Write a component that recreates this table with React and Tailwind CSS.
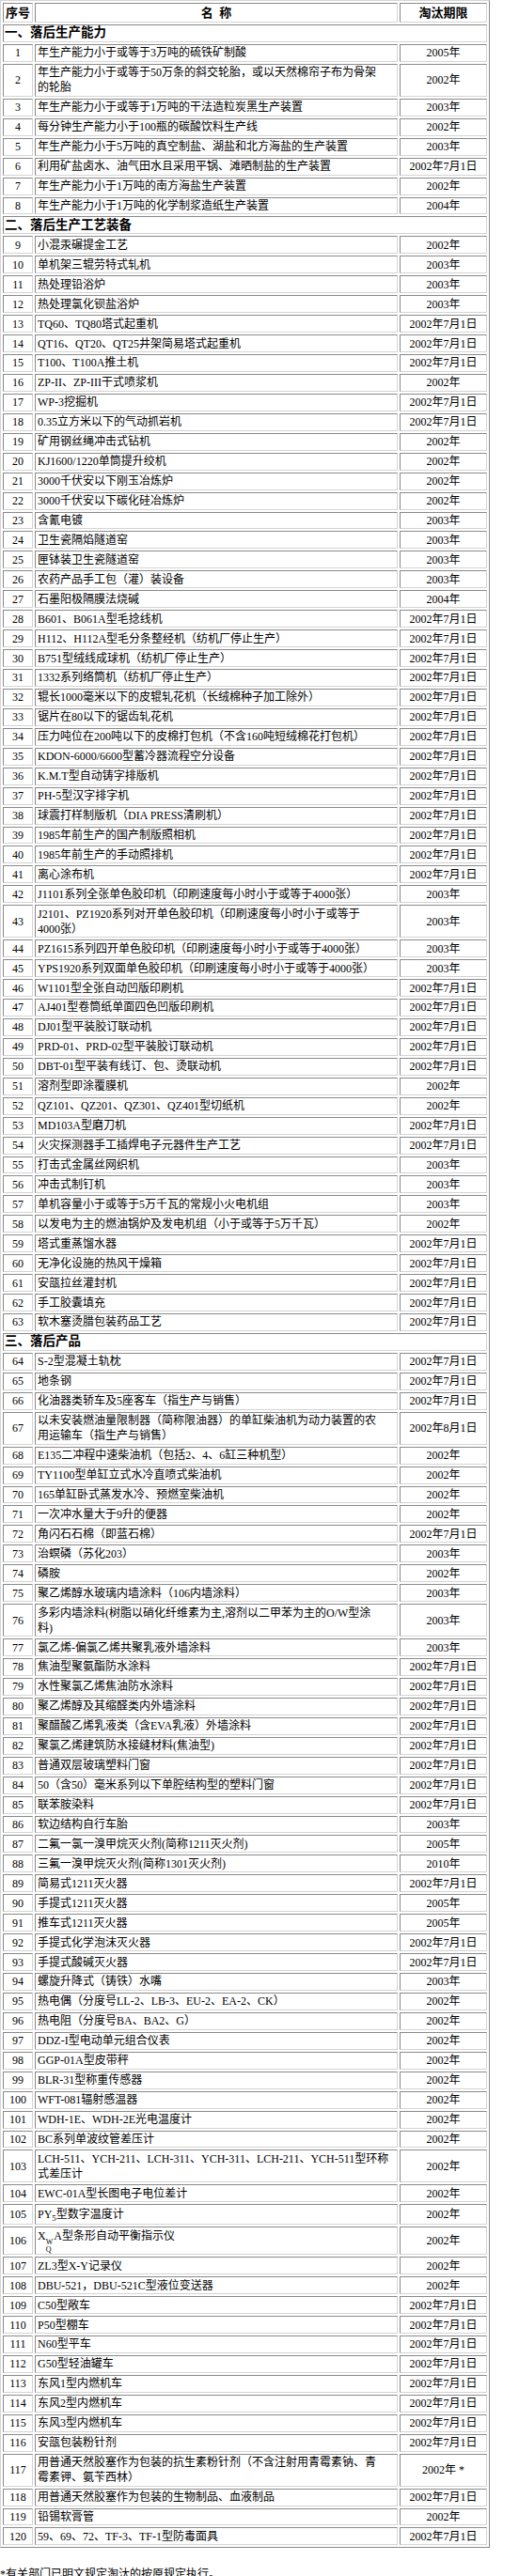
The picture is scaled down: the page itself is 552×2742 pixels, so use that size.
import React from "react";

const S1 = [
  [1, "年生产能力小于或等于3万吨的硫铁矿制酸", "2005年"],
  [2, ["年生产能力小于或等于50万条的斜交轮胎，或以天然棉帘子布为骨架", "的轮胎"], "2002年"],
  [3, "年生产能力小于或等于1万吨的干法造粒炭黑生产装置", "2003年"],
  [4, "每分钟生产能力小于100瓶的碳酸饮料生产线", "2002年"],
  [5, "年生产能力小于5万吨的真空制盐、湖盐和北方海盐的生产装置", "2003年"],
  [6, "利用矿盐卤水、油气田水且采用平锅、滩晒制盐的生产装置", "2002年7月1日"],
  [7, "年生产能力小于1万吨的南方海盐生产装置", "2002年"],
  [8, "年生产能力小于1万吨的化学制浆造纸生产装置", "2004年"],
];

const S2 = [
  [9, "小混汞碾提金工艺", "2002年"],
  [10, "单机架三辊劳特式轧机", "2003年"],
  [11, "热处理铅浴炉", "2003年"],
  [12, "热处理氯化钡盐浴炉", "2003年"],
  [13, "TQ60、TQ80塔式起重机", "2002年7月1日"],
  [14, "QT16、QT20、QT25井架简易塔式起重机", "2002年7月1日"],
  [15, "T100、T100A推土机", "2002年7月1日"],
  [16, "ZP-II、ZP-III干式喷浆机", "2002年"],
  [17, "WP-3挖掘机", "2002年7月1日"],
  [18, "0.35立方米以下的气动抓岩机", "2002年7月1日"],
  [19, "矿用钢丝绳冲击式钻机", "2002年"],
  [20, "KJ1600/1220单筒提升绞机", "2002年"],
  [21, "3000千伏安以下刚玉冶炼炉", "2002年"],
  [22, "3000千伏安以下碳化硅冶炼炉", "2002年"],
  [23, "含氰电镀", "2003年"],
  [24, "卫生瓷隔焰隧道窑", "2003年"],
  [25, "匣钵装卫生瓷隧道窑", "2003年"],
  [26, "农药产品手工包（灌）装设备", "2003年"],
  [27, "石墨阳极隔膜法烧碱", "2004年"],
  [28, "B601、B061A型毛捻线机", "2002年7月1日"],
  [29, "H112、H112A型毛分条整经机（纺机厂停止生产）", "2002年7月1日"],
  [30, "B751型绒线成球机（纺机厂停止生产）", "2002年7月1日"],
  [31, "1332系列络筒机（纺机厂停止生产）", "2002年7月1日"],
  [32, "辊长1000毫米以下的皮辊轧花机（长绒棉种子加工除外）", "2002年7月1日"],
  [33, "锯片在80以下的锯齿轧花机", "2002年7月1日"],
  [34, "压力吨位在200吨以下的皮棉打包机（不含160吨短绒棉花打包机）", "2002年7月1日"],
  [35, "KDON-6000/6600型蓄冷器流程空分设备", "2002年7月1日"],
  [36, "K.M.T型自动铸字排版机", "2002年7月1日"],
  [37, "PH-5型汉字排字机", "2002年7月1日"],
  [38, "球震打样制版机（DIA PRESS清刷机）", "2002年7月1日"],
  [39, "1985年前生产的国产制版照相机", "2002年7月1日"],
  [40, "1985年前生产的手动照排机", "2002年7月1日"],
  [41, "离心涂布机", "2002年7月1日"],
  [42, "J1101系列全张单色胶印机（印刷速度每小时小于或等于4000张）", "2003年"],
  [43, ["J2101、PZ1920系列对开单色胶印机（印刷速度每小时小于或等于", "4000张）"], "2003年"],
  [44, "PZ1615系列四开单色胶印机（印刷速度每小时小于或等于4000张）", "2003年"],
  [45, "YPS1920系列双面单色胶印机（印刷速度每小时小于或等于4000张）", "2003年"],
  [46, "W1101型全张自动凹版印刷机", "2002年7月1日"],
  [47, "AJ401型卷筒纸单面四色凹版印刷机", "2002年7月1日"],
  [48, "DJ01型平装胶订联动机", "2002年7月1日"],
  [49, "PRD-01、PRD-02型平装胶订联动机", "2002年7月1日"],
  [50, "DBT-01型平装有线订、包、烫联动机", "2002年7月1日"],
  [51, "溶剂型即涂覆膜机", "2002年"],
  [52, "QZ101、QZ201、QZ301、QZ401型切纸机", "2002年"],
  [53, "MD103A型磨刀机", "2002年7月1日"],
  [54, "火灾探测器手工插焊电子元器件生产工艺", "2002年7月1日"],
  [55, "打击式金属丝网织机", "2003年"],
  [56, "冲击式制钉机", "2003年"],
  [57, "单机容量小于或等于5万千瓦的常规小火电机组", "2003年"],
  [58, "以发电为主的燃油锅炉及发电机组（小于或等于5万千瓦）", "2002年"],
  [59, "塔式重蒸馏水器", "2002年7月1日"],
  [60, "无净化设施的热风干燥箱", "2002年7月1日"],
  [61, "安瓿拉丝灌封机", "2002年7月1日"],
  [62, "手工胶囊填充", "2002年7月1日"],
  [63, "软木塞烫腊包装药品工艺", "2002年7月1日"],
];

const S3 = [
  [64, "S-2型混凝土轨枕", "2002年7月1日"],
  [65, "地条钢", "2002年7月1日"],
  [66, "化油器类轿车及5座客车（指生产与销售）", "2002年7月1日"],
  [67, ["以未安装燃油量限制器（简称限油器）的单缸柴油机为动力装置的农", "用运输车（指生产与销售）"], "2002年8月1日"],
  [68, "E135二冲程中速柴油机（包括2、4、6缸三种机型）", "2002年"],
  [69, "TY1100型单缸立式水冷直喷式柴油机", "2002年"],
  [70, "165单缸卧式蒸发水冷、预燃室柴油机", "2002年"],
  [71, "一次冲水量大于9升的便器", "2002年"],
  [72, "角闪石石棉（即蓝石棉）", "2002年7月1日"],
  [73, "治螟磷（苏化203）", "2003年"],
  [74, "磷胺", "2002年"],
  [75, "聚乙烯醇水玻璃内墙涂料（106内墙涂料）", "2003年"],
  [76, ["多彩内墙涂料(树脂以硝化纤维素为主,溶剂以二甲苯为主的O/W型涂", "料)"], "2003年"],
  [77, "氯乙烯-偏氯乙烯共聚乳液外墙涂料", "2003年"],
  [78, "焦油型聚氨酯防水涂料", "2002年7月1日"],
  [79, "水性聚氯乙烯焦油防水涂料", "2002年7月1日"],
  [80, "聚乙烯醇及其缩醛类内外墙涂料", "2002年7月1日"],
  [81, "聚醋酸乙烯乳液类（含EVA乳液）外墙涂料", "2002年7月1日"],
  [82, "聚氯乙烯建筑防水接缝材料(焦油型)", "2002年7月1日"],
  [83, "普通双层玻璃塑料门窗", "2002年7月1日"],
  [84, "50（含50）毫米系列以下单腔结构型的塑料门窗", "2002年7月1日"],
  [85, "联苯胺染料", "2002年7月1日"],
  [86, "软边结构自行车胎", "2003年"],
  [87, "二氟一氯一溴甲烷灭火剂(简称1211灭火剂)", "2005年"],
  [88, "三氟一溴甲烷灭火剂(简称1301灭火剂)", "2010年"],
  [89, "简易式1211灭火器", "2002年7月1日"],
  [90, "手提式1211灭火器", "2005年"],
  [91, "推车式1211灭火器", "2005年"],
  [92, "手提式化学泡沫灭火器", "2002年7月1日"],
  [93, "手提式酸碱灭火器", "2002年7月1日"],
  [94, "螺旋升降式（铸铁）水嘴", "2003年"],
  [95, "热电偶（分度号LL-2、LB-3、EU-2、EA-2、CK）", "2002年"],
  [96, "热电阻（分度号BA、BA2、G）", "2002年"],
  [97, "DDZ-I型电动单元组合仪表", "2002年"],
  [98, "GGP-01A型皮带秤", "2002年"],
  [99, "BLR-31型称重传感器", "2002年"],
  [100, "WFT-081辐射感温器", "2002年"],
  [101, "WDH-1E、WDH-2E光电温度计", "2002年"],
  [102, "BC系列单波纹管差压计", "2002年"],
  [103, ["LCH-511、YCH-211、LCH-311、YCH-311、LCH-211、YCH-511型环称", "式差压计"], "2002年"],
  [104, "EWC-01A型长图电子电位差计", "2002年"],
  [105, "PY5", "2002年"],
  [106, "XQW", "2002年"],
  [107, "ZL3型X-Y记录仪", "2002年"],
  [108, "DBU-521，DBU-521C型液位变送器", "2002年"],
  [109, "C50型敞车", "2002年7月1日"],
  [110, "P50型棚车", "2002年7月1日"],
  [111, "N60型平车", "2002年7月1日"],
  [112, "G50型轻油罐车", "2002年7月1日"],
  [113, "东风1型内燃机车", "2002年7月1日"],
  [114, "东风2型内燃机车", "2002年7月1日"],
  [115, "东风3型内燃机车", "2002年7月1日"],
  [116, "安瓿包装粉针剂", "2002年7月1日"],
  [117, ["用普通天然胶塞作为包装的抗生素粉针剂（不含注射用青霉素钠、青", "霉素钾、氨苄西林）"], "2002年 *"],
  [118, "用普通天然胶塞作为包装的生物制品、血液制品", "2002年7月1日"],
  [119, "铅锡软膏管", "2002年"],
  [120, "59、69、72、TF-3、TF-1型防毒面具", "2002年7月1日"],
];

const cell =
  "border border-t-[#8a8a8a] border-l-[#8a8a8a] border-b-[#d4d4d4] border-r-[#d4d4d4] py-[0.48px] leading-[16px]";

function Name({ n, name }) {
  if (n === 105) {
    return (
      <>
        PY<sub className="text-[9px] bottom-[-0.3em]">5</sub>型数字温度计
      </>
    );
  }
  if (n === 106) {
    return (
      <>
        X
        <span className="inline-flex flex-col align-[-5px] text-[8px] leading-[8px] mr-px">
          <span>W</span>
          <span>Q</span>
        </span>
        A型条形自动平衡指示仪
      </>
    );
  }
  if (Array.isArray(name)) {
    return (
      <>
        {name[0]}
        <br />
        {name[1]}
      </>
    );
  }
  return name;
}

function Row({ r }) {
  const [n, name, date] = r;
  const h = n === 105 ? "h-[22px]" : n === 106 ? "h-[23px]" : "";
  return (
    <tr>
      <td className={`${cell} ${h} text-center`}>{n}</td>
      <td className={`${cell} ${h} px-[2px] whitespace-nowrap`}>
        <Name n={n} name={name} />
      </td>
      <td className={`${cell} ${h} text-center whitespace-nowrap`}>{date}</td>
    </tr>
  );
}

function Section({ title }) {
  return (
    <tr>
      <td colSpan={3} className={`${cell} px-[1px] text-[13.5px] font-bold`}>
        {title}
      </td>
    </tr>
  );
}

export default function App() {
  return (
    <div className="bg-white text-black text-[12px] font-[family-name:'Liberation_Serif','Noto_Sans_CJK_SC',serif]">
      <table className="w-[521px] table-fixed border-separate border-spacing-[2px] border border-t-[#d4d4d4] border-l-[#d4d4d4] border-b-[#8a8a8a] border-r-[#8a8a8a]">
        <thead>
          <tr>
            <th className={`${cell} w-[32px] h-[21px] text-[13px] font-bold`}>序号</th>
            <th className={`${cell} w-[386px] h-[21px] text-[13px] font-bold`}>
              名&nbsp;&nbsp;称
            </th>
            <th className={`${cell} w-[93px] h-[21px] text-[13px] font-bold`}>淘汰期限</th>
          </tr>
        </thead>
        <tbody>
          <Section title="一、落后生产能力" />
          {S1.map((r) => (
            <Row key={r[0]} r={r} />
          ))}
          <Section title="二、落后生产工艺装备" />
          {S2.map((r) => (
            <Row key={r[0]} r={r} />
          ))}
          <Section title="三、落后产品" />
          {S3.map((r) => (
            <Row key={r[0]} r={r} />
          ))}
        </tbody>
      </table>
      <p className="mt-[20px] leading-[16px]">*有关部门已明文规定淘汰的按原规定执行。</p>
    </div>
  );
}
